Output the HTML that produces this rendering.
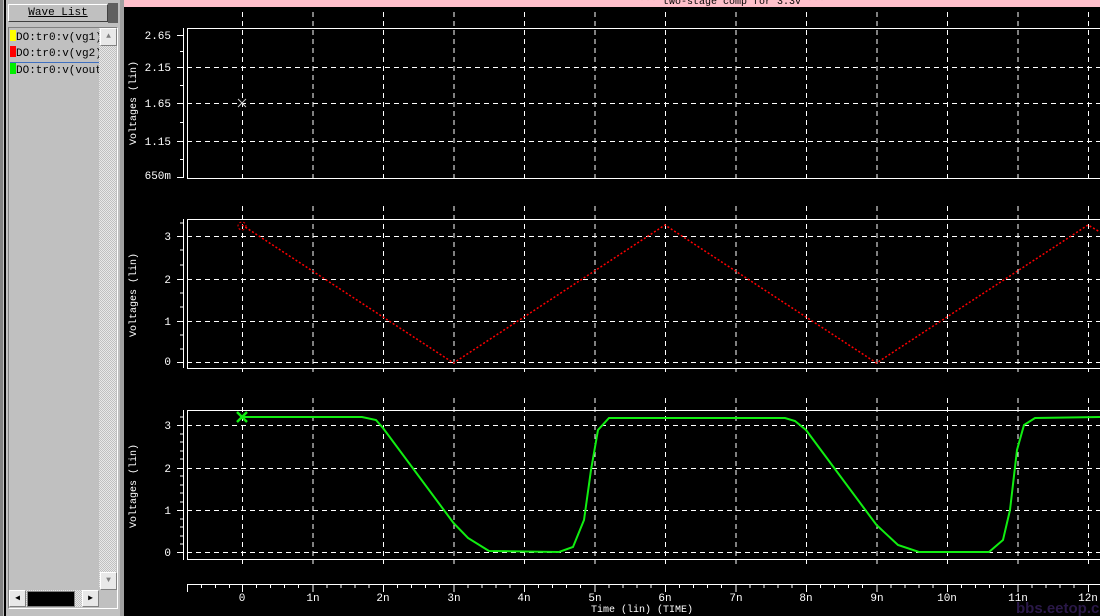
<!DOCTYPE html>
<html><head><style>
body{margin:0;width:1100px;height:616px;overflow:hidden;background:#000;font-family:"Liberation Mono",monospace;}
#left{position:absolute;left:0;top:0;width:124px;height:616px;background:#c0c0c0;}
</style></head><body>
<div id="left">
 <div style="position:absolute;left:0;top:0;width:3px;height:616px;background:#808080"></div>
 <div style="position:absolute;left:4px;top:0;width:2px;height:616px;background:#000"></div>
 <div style="position:absolute;left:120px;top:0;width:4px;height:616px;background:#a0a0a0"></div>
 <div style="position:absolute;left:108px;top:3px;width:10px;height:20px;background:#606060"></div>
 <div style="position:absolute;left:8px;top:4px;width:98px;height:16px;background:#c0c0c0;border:1px solid #fff;border-right-color:#404040;border-bottom-color:#404040;font-size:11px;line-height:16px;text-align:center;text-decoration:underline">Wave List </div>
 <div style="position:absolute;left:8px;top:27px;width:108px;height:580px;border:1px solid #808080;border-right-color:#fff;border-bottom-color:#fff"></div>
 <div style="position:absolute;left:99px;top:28px;width:17px;height:560px;background:repeating-conic-gradient(#c0c0c0 0 25%,#e8e8e8 0 50%) 0 0/2px 2px"></div>
 <div style="position:absolute;left:100px;top:28px;width:15px;height:16px;background:#e8e8e8;border:1px solid #fff;border-right-color:#808080;border-bottom-color:#808080;color:#808080;font-size:8px;text-align:center;line-height:16px">▲</div>
 <div style="position:absolute;left:100px;top:572px;width:15px;height:16px;background:#e8e8e8;border:1px solid #fff;border-right-color:#808080;border-bottom-color:#808080;color:#808080;font-size:8px;text-align:center;line-height:16px">▼</div>
 <div style="position:absolute;left:9px;top:590px;width:90px;height:17px;background:repeating-conic-gradient(#c0c0c0 0 25%,#e8e8e8 0 50%) 0 0/2px 2px"></div>
 <div style="position:absolute;left:9px;top:590px;width:15px;height:15px;background:#e8e8e8;border:1px solid #fff;border-right-color:#808080;border-bottom-color:#808080;font-size:8px;text-align:center;line-height:15px">◀</div>
 <div style="position:absolute;left:27px;top:591px;width:46px;height:14px;background:#000;border:1px solid #808080"></div>
 <div style="position:absolute;left:82px;top:590px;width:15px;height:15px;background:#e8e8e8;border:1px solid #fff;border-right-color:#808080;border-bottom-color:#808080;font-size:8px;text-align:center;line-height:15px">▶</div>
 <div style="position:absolute;left:10px;top:30px;font-size:11px;line-height:16px;white-space:nowrap;width:89px;overflow:hidden">
  <div><span style="display:inline-block;width:6px;height:11px;background:#ff0;vertical-align:-1px"></span>DO:tr0:v(vg1)</div>
  <div><span style="display:inline-block;width:6px;height:11px;background:#f00;vertical-align:-1px"></span>DO:tr0:v(vg2)</div>
  <div style="border-top:1px solid #4070c0"><span style="display:inline-block;width:6px;height:11px;background:#0e0;vertical-align:-1px"></span>DO:tr0:v(vout)</div>
 </div>
</div>
<div style="position:absolute;left:124px;top:0;width:976px;height:7px;background:#ffc0cb;overflow:hidden;font-size:10px;line-height:6px;text-align:center;color:#000;padding-left:240px;box-sizing:border-box">*** two-stage comp for 3.3v ***</div>
<svg style="position:absolute;left:0;top:0" width="1100" height="616" font-family="Liberation Mono, monospace" font-size="11" fill="#fff">
<g stroke="#fff" stroke-dasharray="5,4" stroke-width="1">
 <g id="vg">
 <line x1="242.5" y1="12" x2="242.5" y2="178"/><line x1="313" y1="12" x2="313" y2="178"/><line x1="383.5" y1="12" x2="383.5" y2="178"/><line x1="454" y1="12" x2="454" y2="178"/><line x1="524.5" y1="12" x2="524.5" y2="178"/><line x1="595" y1="12" x2="595" y2="178"/><line x1="665.5" y1="12" x2="665.5" y2="178"/><line x1="736" y1="12" x2="736" y2="178"/><line x1="806.5" y1="12" x2="806.5" y2="178"/><line x1="877" y1="12" x2="877" y2="178"/><line x1="947.5" y1="12" x2="947.5" y2="178"/><line x1="1018" y1="12" x2="1018" y2="178"/><line x1="1088.5" y1="12" x2="1088.5" y2="178"/>
 </g>
 <use href="#vg" y="194"/><use href="#vg" y="386"/>
 <line x1="187" y1="67.5" x2="1100" y2="67.5"/><line x1="187" y1="103.5" x2="1100" y2="103.5"/><line x1="187" y1="141.5" x2="1100" y2="141.5"/>
 <line x1="187" y1="236.5" x2="1100" y2="236.5"/><line x1="187" y1="279.5" x2="1100" y2="279.5"/><line x1="187" y1="321.5" x2="1100" y2="321.5"/><line x1="187" y1="362.5" x2="1100" y2="362.5"/>
 <line x1="187" y1="425.5" x2="1100" y2="425.5"/><line x1="187" y1="468.5" x2="1100" y2="468.5"/><line x1="187" y1="510.5" x2="1100" y2="510.5"/><line x1="187" y1="552.5" x2="1100" y2="552.5"/>
</g>
<g stroke="#fff" fill="none">
 <path d="M1100 28.5H187.5V178.5H1100"/>
 <path d="M1100 219.5H187.5V368.5H1100"/>
 <path d="M1100 410.5H187.5V559.5H1100"/>
 <path d="M183.5 28V178M183.5 219V368M183.5 410V560"/>
 <path d="M177 35.5h7M177 67.5h7M177 103.5h7M177 141.5h7M177 177.5h7M180 51.5h3M180 85.5h3M180 122.5h3M180 159.5h3"/>
 <path d="M177 236.5h7M177 279.5h7M177 321.5h7M177 362.5h7M180 223h3M180 250h3M180 265h3M180 293h3M180 307h3M180 335h3M180 349h3"/>
 <path d="M177 425.5h7M177 468.5h7M177 510.5h7M177 552.5h7M180 417h3M180 434h3M180 442h3M180 451h3M180 459h3M180 476h3M180 485h3M180 493h3M180 502h3M180 519h3M180 527h3M180 536h3M180 544h3"/>
 <path d="M187 584.5H1100"/>
 <path d="M187.5 584v8M242.5 584v8M313 584v8M383.5 584v8M454 584v8M524.5 584v8M595 584v8M665.5 584v8M736 584v8M806.5 584v8M877 584v8M947.5 584v8M1018 584v8M1088.5 584v8" />
 <path d="M201.5 584v4M215.5 584v4M229.5 584v4M256.5 584v4M270.5 584v4M284.5 584v4M298.5 584v4M327 584v4M341 584v4M355 584v4M369 584v4M397.5 584v4M411.5 584v4M425.5 584v4M439.5 584v4M468 584v4M482 584v4M496 584v4M510 584v4M538.5 584v4M552.5 584v4M566.5 584v4M580.5 584v4M609 584v4M623 584v4M637 584v4M651 584v4M679.5 584v4M693.5 584v4M707.5 584v4M721.5 584v4M750 584v4M764 584v4M778 584v4M792 584v4M820.5 584v4M834.5 584v4M848.5 584v4M862.5 584v4M891 584v4M905 584v4M919 584v4M933 584v4M961.5 584v4M975.5 584v4M989.5 584v4M1003.5 584v4M1032 584v4M1046 584v4M1060 584v4M1074 584v4"/>
</g>
<g text-anchor="end">
 <text x="171" y="39">2.65</text><text x="171" y="71">2.15</text><text x="171" y="107">1.65</text><text x="171" y="145">1.15</text><text x="171" y="179">650m</text>
 <text x="171" y="240">3</text><text x="171" y="283">2</text><text x="171" y="325">1</text><text x="171" y="365">0</text>
 <text x="171" y="429">3</text><text x="171" y="472">2</text><text x="171" y="514">1</text><text x="171" y="556">0</text>
</g>
<g font-size="10">
 <text transform="translate(136,145) rotate(-90)">Voltages (lin)</text>
 <text transform="translate(136,337) rotate(-90)">Voltages (lin)</text>
 <text transform="translate(136,528) rotate(-90)">Voltages (lin)</text>
</g>
<g text-anchor="middle">
 <text x="242" y="601">0</text><text x="313" y="601">1n</text><text x="383" y="601">2n</text><text x="454" y="601">3n</text><text x="524" y="601">4n</text><text x="595" y="601">5n</text><text x="665" y="601">6n</text><text x="736" y="601">7n</text><text x="806" y="601">8n</text><text x="877" y="601">9n</text><text x="947" y="601">10n</text><text x="1018" y="601">11n</text><text x="1088" y="601">12n</text>
 <text x="642" y="612" font-size="10">Time (lin) (TIME)</text>
</g>
<path d="M238 99l8 8M246 99l-8 8" stroke="#ccc"/>
<polyline fill="none" stroke="#f00" stroke-width="1.5" stroke-dasharray="2,2" points="242,225 453.5,363 665,225 876.5,363 1088,225 1100,232"/>
<circle cx="242" cy="226" r="4" fill="none" stroke="#f00" stroke-dasharray="2,2"/>
<polyline fill="none" stroke="#1e1" stroke-width="2" points="242,417 362,417 376,420 383,428 453.5,523 468,538 489,551 559,552 573,547 584,520 591,470 598,430 609,418 785,418 795,421 806,430 876.5,525 898,545 919,552 989,552 1003,540 1010,510 1017,450 1024,425 1035,418 1100,417"/>
<path d="M237 412l10 10M247 412l-10 10" stroke="#1e1" stroke-width="2.5"/>
<text x="1016" y="613" font-family="Liberation Sans, sans-serif" font-weight="bold" font-size="15" fill="#2a1848">bbs.eetop.cn</text>
</svg>
</body></html>
